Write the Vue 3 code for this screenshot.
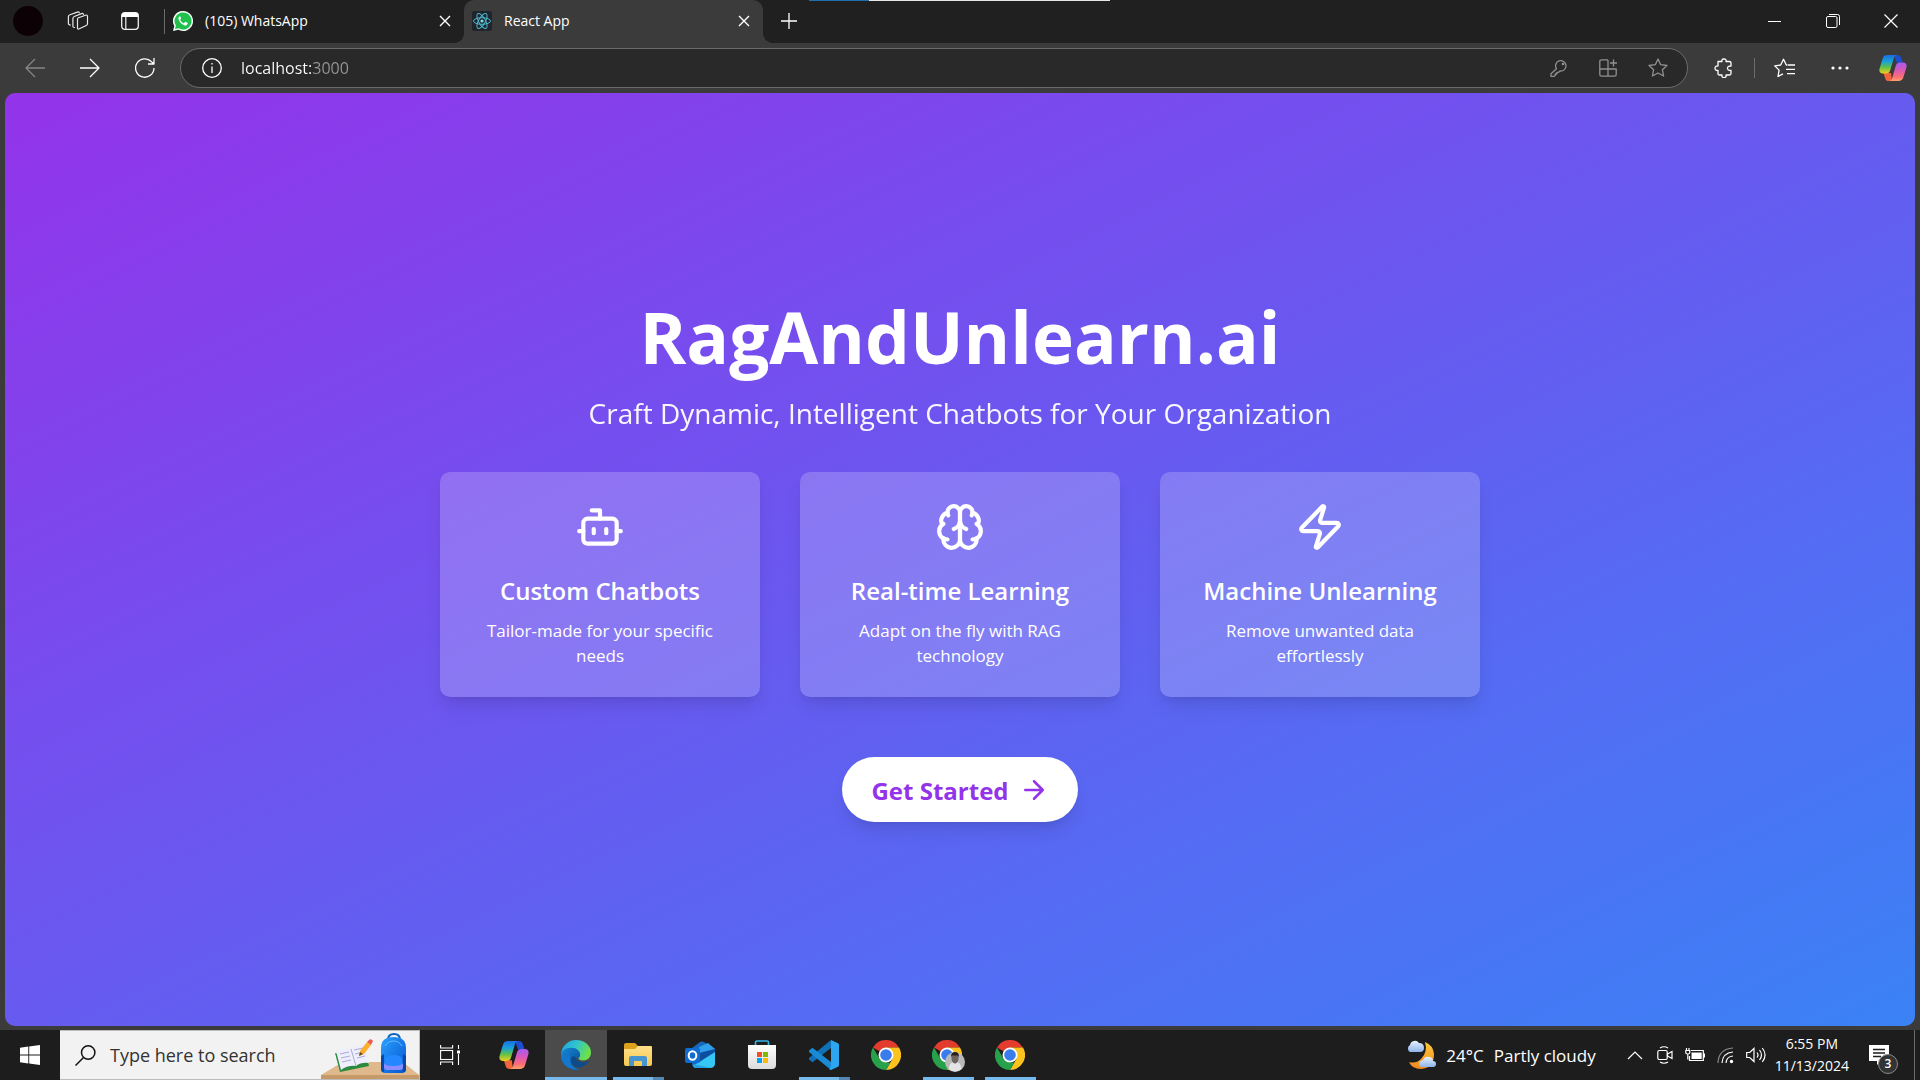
<script setup>
import { ref } from 'vue'

const address = ref('localhost:3000')
const query = ref('')

const tabs = [
  { title: '(105) WhatsApp', icon: 'i-whatsapp', active: false },
  { title: 'React App', icon: 'i-react', active: true },
]

const features = [
  { icon: 'i-bot', title: 'Custom Chatbots', text: 'Tailor-made for your specific needs' },
  { icon: 'i-brain', title: 'Real-time Learning', text: 'Adapt on the fly with RAG technology' },
  { icon: 'i-zap', title: 'Machine Unlearning', text: 'Remove unwanted data effortlessly' },
]

const apps = [
  { name: 'Copilot', icon: 'i-copilot' },
  { name: 'Edge', icon: 'i-edge', state: 'focused' },
  { name: 'File Explorer', icon: 'i-explorer', state: 'open stacked' },
  { name: 'Outlook', icon: 'i-outlook' },
  { name: 'Microsoft Store', icon: 'i-store' },
  { name: 'Visual Studio Code', icon: 'i-vscode', state: 'open stacked' },
  { name: 'Chrome', icon: 'i-chrome' },
  { name: 'Chrome profile', icon: 'i-chrome-user', state: 'open' },
  { name: 'Chrome window', icon: 'i-chrome', state: 'open' },
]
</script>

<template>
  <div class="desktop">
    <svg class="sprite" aria-hidden="true">
      <defs>
        <linearGradient id="g-cool" x1="0" y1="0" x2="0" y2="1">
          <stop offset="0" stop-color="#1a6fe0" /><stop offset=".35" stop-color="#18a0dc" />
          <stop offset=".65" stop-color="#5cc04c" /><stop offset="1" stop-color="#f2cf1d" />
        </linearGradient>
        <linearGradient id="g-warm" x1="0" y1="0" x2="0" y2="1">
          <stop offset="0" stop-color="#a45bf0" /><stop offset=".4" stop-color="#d858b8" />
          <stop offset=".75" stop-color="#fb6b78" /><stop offset="1" stop-color="#ffa06a" />
        </linearGradient>
        <linearGradient id="g-edge-top" x1="0" y1="0" x2="1" y2=".4">
          <stop offset="0" stop-color="#1e9fe0" /><stop offset=".5" stop-color="#2fc3d0" /><stop offset="1" stop-color="#6be04a" />
        </linearGradient>
        <linearGradient id="g-edge-low" x1="0" y1="0" x2="1" y2="1">
          <stop offset="0" stop-color="#1488d8" /><stop offset="1" stop-color="#0c4a94" />
        </linearGradient>
        <linearGradient id="g-folder" x1="0" y1="0" x2="0" y2="1">
          <stop offset="0" stop-color="#ffe08a" /><stop offset="1" stop-color="#f8c850" />
        </linearGradient>
        <linearGradient id="g-moon" x1="0" y1="0" x2="0" y2="1">
          <stop offset="0" stop-color="#fdc93a" /><stop offset="1" stop-color="#f08a1c" />
        </linearGradient>
        <linearGradient id="g-bag" x1="0" y1="0" x2="1" y2="1">
          <stop offset="0" stop-color="#2aa0ff" /><stop offset="1" stop-color="#0555d0" />
        </linearGradient>
        <linearGradient id="g-store" x1="0" y1="0" x2="0" y2="1">
          <stop offset="0" stop-color="#ffffff" /><stop offset="1" stop-color="#dcdcdc" />
        </linearGradient>
        <linearGradient id="g-cloud" x1="0" y1="0" x2="0" y2="1">
          <stop offset="0" stop-color="#e6f0ff" /><stop offset="1" stop-color="#8fb4ea" />
        </linearGradient>
      </defs>

      <symbol id="i-whatsapp" viewBox="0 0 20 20">
        <path d="M10 0a10 10 0 1 1-4.7 18.8L0 20l1.300-5A10 10 0 0 1 10 0z" fill="#f4fff6" />
        <path d="M10 1.500a8.500 8.500 0 1 1-4.300 15.800L2 18.100l.9-3.500A8.500 8.500 0 0 1 10 1.500z" fill="#1fc04b" />
        <path d="M6.800 5.200c-1.500.8-1.700 2.400-1 3.900 1.100 2.400 2.900 4.200 5.300 5.200 1.700.6 3.200-.1 3.600-1.800.1-.4 0-.6-.3-.8l-1.700-.8c-.3-.1-.5 0-.7.2l-.8 1c-.2.2-.4.200-.7.1a7 7 0 0 1-3.200-2.900c-.2-.3-.1-.5.1-.7.600-.6.8-1 .6-1.500l-.7-1.600c-.1-.2-.3-.3-.5-.3z" fill="#fff" />
      </symbol>
      <symbol id="i-react" viewBox="0 0 20 20">
        <rect width="20" height="20" rx="2" fill="#20252b" />
        <g fill="none" stroke="#4cb8d0" stroke-width="1">
          <ellipse cx="10" cy="10" rx="8.500" ry="3.300" />
          <ellipse cx="10" cy="10" rx="8.500" ry="3.300" transform="rotate(60 10 10)" />
          <ellipse cx="10" cy="10" rx="8.500" ry="3.300" transform="rotate(120 10 10)" />
        </g>
        <circle cx="10" cy="10" r="1.600" fill="#7fdcf0" />
      </symbol>
      <symbol id="i-workspaces" viewBox="0 0 22 22">
        <g fill="none" stroke="#e8e8e8" stroke-width="1.200" stroke-linejoin="round" stroke-linecap="round">
          <path d="M10.500 9.200q0-1 1-1.400l7-2.600q2-.7 2 1.200v7.400q0 1.200-1.200 1.700l-7 3.300q-1.800.8-1.800-1z" />
          <path d="M7.600 17.500q-1.700.1-1.700-1.500V8.500q0-1.500 1.400-2l7.200-2.900q1.700-.6 2 .7" />
          <path d="M3.400 15Q1.400 15 1.400 13.300V6.800q0-1.500 1.500-2l7.400-2.700q1.500-.5 2 .6" />
        </g>
      </symbol>
      <symbol id="i-tabs" viewBox="0 0 18 18">
        <rect x=".7" y=".7" width="16.600" height="16.600" rx="3" fill="none" stroke="#f0f0f0" stroke-width="1.300" />
        <path d="M.7 5V3.500A2.800 2.800 0 0 1 3.500.7h11a2.800 2.800 0 0 1 2.800 2.800V5z" fill="#fff" />
        <path d="M4.800 5v12" stroke="#f0f0f0" stroke-width="1.200" />
      </symbol>
      <symbol id="i-x" viewBox="0 0 12 12">
        <path d="M1 1l10 10M11 1L1 11" fill="none" stroke="#fff" stroke-width="1.400" />
      </symbol>
      <symbol id="i-copilot" viewBox="0 0 28 28">
        <path d="M15 1h3.500c2.400 0 3.300 1.200 4 3.600l1.200 4.200h-6z" fill="#1b4fd0" />
        <path d="M13 27H9.500c-2 0-3-1.200-3.600-3.600L4.500 19H12z" fill="#f2643c" />
        <path d="M8.500 1h9c-1.600.4-2.300 1.700-2.900 3.800L11.300 16c-.7 2.500-2 3.500-4.300 3.500H3.800C1 19.500-.2 17.500.6 14.600L3.700 4.400C4.500 2 6 1 8.500 1z" fill="url(#g-cool)" />
        <path d="M19.500 27h-9c1.600-.4 2.300-1.700 2.900-3.800L16.700 12c.7-2.500 2-3.500 4.300-3.500h3.200c2.800 0 4 2 3.200 4.900l-3.100 10.200c-.8 2.400-2.300 3.400-4.800 3.400z" fill="url(#g-warm)" />
      </symbol>
      <symbol id="i-edge" viewBox="0 0 30 30">
        <path d="M0 15A15 15 0 0 1 15 0c9 0 15 6 15 12.500 0 5-3.500 8-8 8-3 0-4.500-1-4.500-2.200 0-.8 1.200-1.400 1.200-3.600 0-2.700-2.800-5-6.700-5C6 9.700 0 14 0 20z" fill="url(#g-edge-top)" />
        <path d="M0 15.500C0 10.500 5 7.800 10.500 7.800c5.400 0 8.600 3.400 8.600 6.900 0 2-1.100 2.600-1.400 3.500-4-2.800-8.200.3-7.200 4.600.8 3.600 4 6.200 8.200 6.700A15 15 0 0 1 0 15.500z" fill="url(#g-edge-low)" />
        <path d="M10.400 17.500c-1.800 7 4.600 11.500 10.200 9.500 3.300-1 5.700-3.200 7-5.200.4-.6-.2-1-.7-.7-4.900 2.500-10.500.9-11.500-2.300-.8-2.300-3.800-3.500-5-1.300z" fill="#0e4b8c" />
        <path d="M0 15.500c.4 8.500 8 15.500 18.500 14C12 28.500 7 23 9.500 15.500z" fill="#1577cc" />
      </symbol>
      <symbol id="i-explorer" viewBox="0 0 30 30">
        <path d="M1 5q0-2 2-2h9l3 3H29v6H1z" fill="#dca21c" />
        <path d="M1 9h11l3-3h12q2 0 2 2v16q0 2-2 2H3q-2 0-2-2z" fill="url(#g-folder)" />
        <path d="M6 26v-8q0-2 2-2h14q2 0 2 2v8h-5v-5h-8v5z" fill="#4795cf" />
      </symbol>
      <symbol id="i-outlook" viewBox="0 0 30 30">
        <path d="M15 2q2-1.200 4 0l11 7v14q0 4-4 4H10q-3 0-3-3V8z" fill="#1668bd" />
        <path d="M14 7l9-4 7 6v4l-15 8z" fill="#2e9fe8" />
        <path d="M14 13l16-4v4L14 23z" fill="#0e4ea0" />
        <path d="M8 26L30 12v11q0 5-5 5H11q-2 0-3-2z" fill="#35c8f4" />
        <path d="M8 24l18 4H11q-3 0-3-4z" fill="#249fe4" />
        <rect y="8" width="15" height="15" rx="2" fill="#0f6cd0" />
        <ellipse cx="7.500" cy="15.500" rx="3.800" ry="4.200" fill="none" stroke="#fff" stroke-width="2" />
      </symbol>
      <symbol id="i-store" viewBox="0 0 30 30">
        <path d="M8.500 7V2.500Q8.500 1 10 1h10q1.500 0 1.500 1.500V7" fill="none" stroke="#33b8e8" stroke-width="1.600" />
        <path d="M1 5h28v20q0 4-4 4H5q-4 0-4-4z" fill="url(#g-store)" />
        <path d="M10 12h5v5h-5z" fill="#f25022" /><path d="M16 12h5v5h-5z" fill="#7fba00" />
        <path d="M10 18h5v5h-5z" fill="#00a4ef" /><path d="M16 18h5v5h-5z" fill="#ffb900" />
      </symbol>
      <symbol id="i-vscode" viewBox="0 0 30 30">
        <path d="M22 0v8L3.500 22.300 0 19.500q-.6-.8 0-1.500z" fill="#0f72b8" />
        <path d="M22 30v-8L3.500 7.700 0 10.500q-.6.800 0 1.500z" fill="#1b8ad4" />
        <path d="M22 0l7 3.200q1 .5 1 1.800v20q0 1.300-1 1.800L22 30q-1 .2-1.500-.8L22 26z" fill="#2da6f2" />
      </symbol>
      <symbol id="i-chrome" viewBox="0 0 30 30">
        <path d="M15 15L2 7.500A15 15 0 0 1 28 7.500H15z" fill="#e33b2e" />
        <path d="M15 7.500h13A15 15 0 0 1 15 30l6.500-11.200z" fill="#fcc31e" />
        <path d="M2 7.500l6.500 11.300L15 22.500h4.300L15 30A15 15 0 0 1 2 7.500z" fill="#27a24a" />
        <circle cx="15" cy="15" r="7.500" fill="#fff" />
        <circle cx="15" cy="15" r="5.800" fill="#3a7cec" />
      </symbol>
      <symbol id="i-chrome-user" viewBox="0 0 34 34">
        <use href="#i-chrome" x="1" y="2" width="30" height="30" />
        <circle cx="24" cy="24" r="10" fill="#b9b9b9" />
        <path d="M17.500 31q1-6 4.500-7l2 2 2-2q4 1 4.500 7a10 10 0 0 1-13 0z" fill="#e4e4e4" />
        <path d="M20.500 18q0-3 3.500-3t3.500 3v3q-.5 4-3.500 4.500-3-.5-3.500-4.500z" fill="#6d6460" />
        <path d="M20 19q0-5 4-5t4 5l-1-1.500h-6z" fill="#26211f" />
      </symbol>

      <symbol id="i-bot" viewBox="0 0 24 24">
        <path d="M12 8V4H8" /><rect width="16" height="12" x="4" y="8" rx="2" />
        <path d="M2 14h2M20 14h2M15 13v2M9 13v2" />
      </symbol>
      <symbol id="i-brain" viewBox="0 0 24 24">
        <path d="M12 5a3 3 0 1 0-5.997.125 4 4 0 0 0-2.526 5.770 4 4 0 0 0 .556 6.588A4 4 0 1 0 12 18Z" />
        <path d="M12 5a3 3 0 1 1 5.997.125 4 4 0 0 1 2.526 5.770 4 4 0 0 1-.556 6.588A4 4 0 1 1 12 18Z" />
        <path d="M15 13a4.500 4.500 0 0 1-3-4 4.500 4.500 0 0 1-3 4" />
        <path d="M17.599 6.500a3 3 0 0 0 .399-1.375M6.003 5.125A3 3 0 0 0 6.401 6.500M3.477 10.896a4 4 0 0 1 .585-.396M19.938 10.500a4 4 0 0 1 .585.396M6 18a4 4 0 0 1-1.967-.516M19.967 17.484A4 4 0 0 1 18 18" />
      </symbol>
      <symbol id="i-zap" viewBox="0 0 24 24">
        <path d="M4 14a1 1 0 0 1-.78-1.630l9.900-10.200a.5.5 0 0 1 .86.460l-1.920 6.020A1 1 0 0 0 13 10h7a1 1 0 0 1 .78 1.630l-9.900 10.200a.5.5 0 0 1-.86-.460l1.920-6.020A1 1 0 0 0 11 14z" />
      </symbol>
    </svg>

    <header class="tab-strip">
      <span class="load-bar"></span>
      <button class="plain profile" aria-label="Profile"></button>
      <button class="plain workspaces" aria-label="Workspaces"><svg width="22" height="22"><use href="#i-workspaces" /></svg></button>
      <button class="plain tab-actions" aria-label="Tab actions"><svg width="18" height="18"><use href="#i-tabs" /></svg></button>
      <span class="divider"></span>
      <div v-for="tab in tabs" :key="tab.title" class="tab" :class="{ active: tab.active }">
        <svg width="20" height="20"><use :href="'#' + tab.icon" /></svg>
        <span class="tab-title">{{ tab.title }}</span>
        <button class="plain" aria-label="Close tab"><svg width="12" height="12"><use href="#i-x" /></svg></button>
      </div>
      <button class="plain new-tab" aria-label="New tab">
        <svg width="18" height="18" viewBox="0 0 18 18"><path d="M9 1v16M1 9h16" stroke="#fff" stroke-width="1.300" /></svg>
      </button>
      <div class="window-buttons">
        <button class="plain" aria-label="Minimize"><svg width="14" height="14" viewBox="0 0 14 14"><path d="M0 7.500h13" stroke="#fff" /></svg></button>
        <button class="plain" aria-label="Restore">
          <svg width="14" height="14" viewBox="0 0 14 14" fill="none" stroke="#fff">
            <rect x=".5" y="2.500" width="10.500" height="11" rx="1.500" /><path d="M3 .5h8.500q2 0 2 2V11" />
          </svg>
        </button>
        <button class="plain" aria-label="Close"><svg width="14" height="14" viewBox="0 0 14 14"><path d="M.5.5l13 13M13.500.5l-13 13" stroke="#fff" stroke-width="1.200" /></svg></button>
      </div>
    </header>

    <nav class="toolbar">
      <button class="plain nav dim" aria-label="Back"><svg width="20" height="20" viewBox="0 0 20 20"><path d="M20 10H1M10 1l-9 9 9 9" /></svg></button>
      <button class="plain nav" aria-label="Forward"><svg width="20" height="20" viewBox="0 0 20 20"><path d="M0 10h19M10 1l9 9-9 9" /></svg></button>
      <button class="plain nav" aria-label="Refresh"><svg width="20" height="22" viewBox="0 0 20 22"><path d="M19 11a9.200 9.200 0 1 1-2.500-6.300L19 7M19 1v6h-6" /></svg></button>
      <div class="address">
        <button class="plain" aria-label="Site information">
          <svg width="20" height="20" viewBox="0 0 20 20" fill="none" stroke="#f0f0f0" stroke-width="1.300"><circle cx="10" cy="10" r="9.300" /><path d="M10 8.500V15M10 5v1.500" /></svg>
        </button>
        <input v-model="address" class="url" type="text" aria-label="Address" spellcheck="false" />
        <button class="plain" aria-label="Passwords">
          <svg width="18" height="18" viewBox="0 0 18 18"><path d="M6.500 9.800A5.200 5.200 0 1 1 10 12L8.300 13.400H6.800V15H5.200v1.500L4 17.400H1V14.800z" /><circle cx="13" cy="5" r=".7" /></svg>
        </button>
        <button class="plain" aria-label="Split screen">
          <svg width="18" height="18" viewBox="0 0 18 18"><path d="M9 .9H2.500Q.8.900.8 2.500v13q0 1.700 1.700 1.700h13q1.700 0 1.700-1.700V10H.8M9 .9v16.300M14.500.5v7M11 4h7" /></svg>
        </button>
        <button class="plain" aria-label="Add to favorites">
          <svg width="20" height="20" viewBox="0 0 20 20"><path d="M10 1l2.700 5.700 6.300.8-4.600 4.300 1.200 6.200L10 15l-5.600 3 1.200-6.200L1 7.500l6.300-.8z" /></svg>
        </button>
      </div>
      <button class="plain extensions" aria-label="Extensions">
        <svg width="20" height="20" viewBox="0 0 20 20"><path d="M4 3.500h4q-.6-2.500 1.800-2.700Q12.600 1 12 3.500h3.500q1.500 0 1.500 1.500v3q-3.500-.2-3.500 2.200t3.500 2.300v3q0 1.500-1.500 1.500H12q.6 2.500-1.800 2.600Q7.400 19.500 8 17H5.500Q4 17 4 15.500V12.500Q1 12.700 1 10.200T4 8z" /></svg>
      </button>
      <span class="divider"></span>
      <button class="plain favorites" aria-label="Favorites">
        <svg width="21" height="20" viewBox="0 0 21 20"><path d="M13.500 7H12.300L9.500 1.300 6.700 7l-6 .8 4.400 4.300L4 18.500l5-2.600M14 7h7M12 11.300h9M13 15.600h8" /></svg>
      </button>
      <button class="plain menu" aria-label="Settings and more">
        <svg width="18" height="4" viewBox="0 0 18 4"><g fill="#fff" stroke="none"><circle cx="2" cy="2" r="1.600" /><circle cx="9" cy="2" r="1.600" /><circle cx="16" cy="2" r="1.600" /></g></svg>
      </button>
      <button class="plain copilot" aria-label="Copilot"><svg width="28" height="28"><use href="#i-copilot" /></svg></button>
    </nav>

    <main class="page">
      <h1>RagAndUnlearn.ai</h1>
      <p class="tagline">Craft Dynamic, Intelligent Chatbots for Your Organization</p>
      <section class="cards">
        <article v-for="item in features" :key="item.title" class="card">
          <svg class="line-icon" width="50" height="50"><use :href="'#' + item.icon" /></svg>
          <h2>{{ item.title }}</h2>
          <p>{{ item.text }}</p>
        </article>
      </section>
      <button class="cta">
        <span>Get Started</span>
        <svg class="line-icon" width="30" height="30" viewBox="0 0 24 24"><path d="M5 12h14M12 5l7 7-7 7" /></svg>
      </button>
    </main>

    <footer class="taskbar">
      <button class="plain start" aria-label="Start">
        <svg width="20" height="20" viewBox="0 0 20 20" fill="#fff"><path d="M0 2.800L8.300 1.500v8H0zM9.200 1.400L20 0v9.500H9.200zM0 10.400h8.300v8L0 17.200zM9.200 10.400H20V20L9.200 18.500z" /></svg>
      </button>
      <label class="search">
        <svg width="21" height="21" viewBox="0 0 21 21" fill="none" stroke="#111" stroke-width="1.500"><circle cx="13.200" cy="7.500" r="6.700" /><path d="M8.500 12.500L.5 20.500" /></svg>
        <input v-model="query" type="text" placeholder="Type here to search" aria-label="Search" />
        <svg class="scene" width="98" height="48" viewBox="0 0 98 48">
          <path d="M0 44L20 32q2-1 4-1h54q3 0 5 1l15 12v4H0z" fill="#dfb98c" /><path d="M0 44h98v4H0z" fill="#c69a68" />
          <path d="M14 22l5 19 29-6-1-4z" fill="#2c8a3e" />
          <path d="M15 20q8-4 15-2 6-5 13-5l5 19q-8-1-13 3-8-1-15 4z" fill="#eeeefc" />
          <path d="M30 18l5 17M19 23l9-2M20 27l9-2M21 31l9-2M33 19l9-2M34 23l9-2M36 27l8-2" stroke="#a9a9d6" fill="none" />
          <path d="M38 25l1-5 7-9 4 3-7 9z" fill="#fbb02c" /><path d="M46 11l2-2q2-2 4 1l-2 4z" fill="#ef5b52" /><path d="M38 25l1-4 3 2z" fill="#6b4326" />
          <path d="M67 9q0-6 6-6t6 6" fill="none" stroke="#0e62c4" stroke-width="2" />
          <path d="M60 17Q60 6 72.500 6T85 17v21q0 4-4 4H64q-4 0-4-4z" fill="url(#g-bag)" />
          <path d="M60 25l3-2v18q-3 0-3-3zM85 25l-3-2v18q3 0 3-3z" fill="#0846a8" />
          <path d="M64 29q0-5 8.500-5t8.500 5v7H64z" fill="#2388ff" /><path d="M63 32q1 3 9.500 3t9.500-3v4q0 3-3 3H66q-3 0-3-3z" fill="#8b8cff" />
          <path d="M64 15q3-5 8.500-5t8.500 5" fill="none" stroke="#68b8ff" />
        </svg>
      </label>
      <button class="plain start" aria-label="Task view">
        <svg width="20" height="20" viewBox="0 0 20 20" fill="none" stroke="#fff" stroke-width="1.100"><path d="M.6 0v3h12V0M.6 20v-3h12v3M18.500 0v4M18.500 9v11" /><rect x=".6" y="5.500" width="12" height="9" /><path d="M17 5.500h3v3h-3z" fill="#fff" stroke="none" /></svg>
      </button>
      <div class="apps">
        <button v-for="app in apps" :key="app.name" class="plain app" :class="app.state" :aria-label="app.name">
          <svg :width="app.icon === 'i-chrome-user' ? 34 : 30" :height="app.icon === 'i-chrome-user' ? 34 : 30"><use :href="'#' + app.icon" /></svg>
        </button>
      </div>
      <div class="tray">
        <button class="plain weather">
          <svg width="30" height="30" viewBox="0 0 30 30">
            <path d="M19 2q8 3 9 12 0 14-13 15-9 0-12-7 7 2 12-3 7-7 4-17z" fill="url(#g-moon)" />
            <path d="M4 12a4 4 0 0 1 0-7 5 5 0 0 1 9-2q5 0 5 5 0 4-4 4z" fill="url(#g-cloud)" />
            <path d="M16 27q-3 0-3-3t4-4q2-4 6-3 4 0 4 4 3 0 3 3t-3 3z" fill="url(#g-cloud)" />
          </svg>
          <span>24°C</span><span>Partly cloudy</span>
        </button>
        <button class="plain chevron" aria-label="Hidden icons"><svg width="16" height="10" viewBox="0 0 16 10"><path d="M1 9l7-7 7 7" /></svg></button>
        <button class="plain" aria-label="Meet now"><svg width="16" height="20" viewBox="0 0 16 20"><path d="M3 3q4-2.500 8 0M3 17q4 2.500 8 0" /><rect x=".8" y="5.500" width="9.400" height="9" rx="1.500" /><path d="M10.500 9L15 6.500v7L10.500 11z" /></svg></button>
        <button class="plain" aria-label="Battery"><svg width="20" height="16" viewBox="0 0 20 16"><path d="M6 3.500h12.300v10H4.500V9M19.400 6.500v4M1.500 1v2.500M4 1v2.500M.8 3.500h4v2q0 1.500-2 1.500t-2-1.500zM2.800 7v5.500" /><path d="M6.500 5.500h10.200V12H6.500z" fill="#fff" stroke="none" /></svg></button>
        <button class="plain" aria-label="Network"><svg width="17" height="17" viewBox="0 0 17 17"><path d="M1 16Q1.500 2 16 1" stroke="#8a8a8a" /><path d="M5 16Q5.500 6 16 5M9 16q.5-6.500 7-7" /><circle cx="14.500" cy="14.500" r="1.700" fill="#fff" stroke="none" /></svg></button>
        <button class="plain" aria-label="Volume"><svg width="20" height="16" viewBox="0 0 20 16"><path d="M.7 5.500v5h3L8 14.500v-13L3.700 5.500zM11 5.500q2 2.500 0 5M13.500 3q4 5 0 10M16.300 1q5.500 7 0 14" /></svg></button>
        <button class="plain clock"><span>6:55 PM</span><span>11/13/2024</span></button>
        <button class="plain notes" aria-label="Notifications">
          <svg width="20" height="20" viewBox="0 0 20 20"><path d="M0 0h20v16h-8l-4 4v-4H0z" fill="#fff" stroke="none" /><path d="M4 4.500h12M4 8h12M4 11.500h8" stroke="#1d1d1d" stroke-width="1.400" /></svg>
          <span class="badge">3</span>
        </button>
      </div>
    </footer>
  </div>
</template>

<style>
body { margin: 0; }
</style>

<style scoped>
.desktop {
  display: flex;
  flex-direction: column;
  min-height: 100vh;
  background: #3b3b3b;
  color: #fff;
  font-family: "Open Sans", "Noto Sans", sans-serif;
}
.desktop *, .desktop *::before, .desktop *::after { box-sizing: border-box; }
.sprite { position: absolute; width: 0; height: 0; }
svg { display: block; flex: none; }
.plain { padding: 0; border: 0; background: none; color: inherit; font: inherit; flex: none; }
.divider { width: 1px; background: #6b6b6b; flex: none; }

/* Tab strip */
.tab-strip { position: relative; display: flex; align-items: center; height: 43px; padding: 0 0 1px 13px; background: #202020; }
.load-bar { position: absolute; top: 0; left: 809px; width: 301px; height: 1px; background: linear-gradient(90deg, #1f6fae 60px, #e6e6e6 60px); }
.profile { width: 30px; height: 30px; border-radius: 50%; background: #0c0205; }
.workspaces { margin-left: 24px; }
.tab-actions { margin: 0 25px 0 32px; }
.tab-strip .divider { height: 25px; }
.tab { position: relative; display: flex; align-items: center; align-self: flex-start; gap: 12px; flex: 0 1 299px; height: 43px; padding: 0 13px 2px 8px; font-size: 14px; }
.tab-title { flex: 1; white-space: nowrap; }
.tab.active { background: #3b3b3b; border-radius: 10px 10px 0 0; }
.tab.active::before, .tab.active::after { content: ""; position: absolute; bottom: 0; width: 10px; height: 10px; }
.tab.active::before { right: 100%; background: radial-gradient(circle at 0 0, #202020 10px, #3b3b3b 10px); }
.tab.active::after { left: 100%; background: radial-gradient(circle at 100% 0, #202020 10px, #3b3b3b 10px); }
.new-tab { margin-left: 17px; }
.window-buttons { display: flex; gap: 44px; margin-left: auto; padding-right: 22px; }

/* Toolbar */
.toolbar { display: flex; align-items: center; height: 50px; padding: 0 13px 0 25px; }
.toolbar svg { fill: none; stroke: #fff; stroke-width: 1.3; stroke-linejoin: round; }
.toolbar .copilot svg { stroke: none; }
.nav { margin-right: 35px; }
.nav.dim svg { stroke: #858585; }
.nav + .address { margin-left: -10px; }
.address { display: flex; align-items: center; gap: 31px; flex: 1; height: 40px; padding: 0 19px 0 21px; border: 1px solid #6b6b6b; border-radius: 20px; background: #292929; }
.address button:not(:first-child) svg { stroke: #909090; }
.url {
  flex: 1; min-width: 0; margin-left: -12px; padding: 0 0 1px; border: 0; outline: 0; font: inherit; font-size: 16px;
  color: transparent; background: linear-gradient(90deg, #fff 71px, #969696 71px); -webkit-background-clip: text; background-clip: text;
}
.extensions { margin: 0 20px 0 26px; }
.toolbar .divider { height: 20px; }
.favorites { margin: 0 36px 0 19px; }
.menu { margin-right: 30px; }

/* Landing page */
.page {
  display: flex; flex-direction: column; align-items: center; justify-content: center; flex: 1;
  margin: 0 5px 4px; border-radius: 10px;
  background: linear-gradient(to bottom right, #9333ea, #3b82f6);
  text-align: center;
}
h1, h2, p { margin: 0; }
h1 { font-size: 71px; line-height: 80px; font-weight: 700; margin-bottom: 16px; }
.tagline { font-size: 28px; line-height: 40px; margin-bottom: 39px; opacity: 0.95; }
.cards { display: flex; gap: 40px; margin-bottom: 60px; }
.card {
  display: flex; flex-direction: column; align-items: center; width: 320px; padding: 30px 30px 29px; border-radius: 10px;
  background: rgba(255, 255, 255, 0.2);
  box-shadow: 0 12px 19px -4px rgba(0, 0, 0, 0.1), 0 5px 8px -5px rgba(0, 0, 0, 0.1);
}
.line-icon { fill: none; stroke: currentColor; stroke-width: 2; stroke-linecap: round; stroke-linejoin: round; }
h2 { margin: 21px 0 10px; font-size: 24px; line-height: 35px; font-weight: 600; }
.card p { font-size: 17px; line-height: 25px; }
.cta {
  display: flex; align-items: center; gap: 10px; height: 65px; padding: 0 29px; border: 0; border-radius: 33px;
  background: #fff; color: #9333ea; font: 700 24px/35px "Open Sans", "Noto Sans", sans-serif;
  box-shadow: 0 12px 19px -4px rgba(0, 0, 0, 0.1), 0 5px 8px -5px rgba(0, 0, 0, 0.1);
}
.cta span { padding-top: 2px; }

/* Taskbar */
.taskbar { display: flex; height: 50px; background: #1d1d1d; }
.start { display: flex; align-items: center; justify-content: center; width: 60px; }
.search { position: relative; display: flex; align-items: center; gap: 14px; width: 360px; padding-left: 15px; background: #f2f2f2; border: 1px solid #bcbcbc; border-left: 0; }
.search input { flex: 1; min-width: 0; padding: 0; border: 0; outline: 0; background: none; color: #333; font: inherit; font-size: 18px; }
.search input::placeholder { color: #333; opacity: 1; }
.search .scene { align-self: flex-end; }
.apps { display: flex; margin-left: 3px; }
.app { position: relative; display: flex; align-items: center; justify-content: center; width: 62px; }
.app.focused { background: #4b4b4b; }
.app.focused::after, .app.open::after { content: ""; position: absolute; bottom: 0; height: 3px; background: #76b9ed; }
.app.focused::after { left: 0; right: 0; }
.app.open::after { left: 6px; right: 5px; }
.app.stacked::after { background: linear-gradient(90deg, #76b9ed 40px, #5486af 40px); }
.tray { position: relative; display: flex; align-items: center; gap: 12px; margin-left: auto; padding-right: 31px; }
.tray::after { content: ""; position: absolute; top: 0; bottom: 0; right: 5px; width: 1px; background: #6b6b6b; }
.tray svg { fill: none; stroke: #fff; stroke-width: 1.2; }
.weather { display: flex; align-items: center; gap: 10px; margin-right: 19px; font-size: 17px; white-space: nowrap; }
.tray .weather svg { stroke: none; }
.chevron { margin-right: 2px; }
.clock { display: flex; flex-direction: column; align-items: center; font-size: 14px; line-height: 22px; margin: 0 8px 0 -3px; }
.notes { position: relative; }
.badge {
  position: absolute; top: 9px; left: 9px; width: 20px; height: 20px; border: 1px solid #8a8a8a; border-radius: 50%;
  background: #333; font-size: 12px; line-height: 18px; font-weight: 600; text-align: center;
}
</style>
